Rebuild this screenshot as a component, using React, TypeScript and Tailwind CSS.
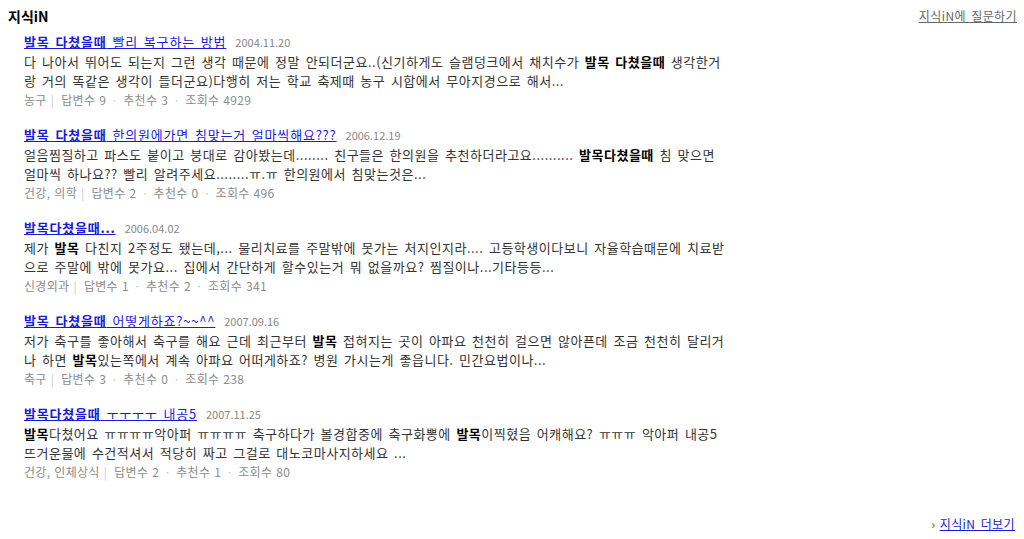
import React from "react";

type Seg = { t: string; b?: boolean };

type Item = {
  title: Seg[];
  date: string;
  lines: Seg[][];
  cat: string;
  ans: number;
  rec: number;
  view: number;
};

const items: Item[] = [
  {
    title: [{ t: "발목 다쳤을때", b: true }, { t: " 빨리 복구하는 방법" }],
    date: "2004.11.20",
    lines: [
      [
        { t: "다 나아서 뛰어도 되는지 그런 생각 때문에 정말 안되더군요..(신기하게도 슬램덩크에서 채치수가 " },
        { t: "발목 다쳤을때", b: true },
        { t: " 생각한거" },
      ],
      [{ t: "랑 거의 똑같은 생각이 들더군요)다행히 저는 학교 축제때 농구 시합에서 무아지경으로 해서..." }],
    ],
    cat: "농구",
    ans: 9,
    rec: 3,
    view: 4929,
  },
  {
    title: [{ t: "발목 다쳤을때", b: true }, { t: " 한의원에가면 침맞는거 얼마씩해요???" }],
    date: "2006.12.19",
    lines: [
      [
        { t: "얼음찜질하고 파스도 붙이고 붕대로 감아봤는데........ 친구들은 한의원을 추천하더라고요.......... " },
        { t: "발목다쳤을때", b: true },
        { t: " 침 맞으면" },
      ],
      [{ t: "얼마씩 하나요?? 빨리 알려주세요........ㅠ.ㅠ 한의원에서 침맞는것은..." }],
    ],
    cat: "건강, 의학",
    ans: 2,
    rec: 0,
    view: 496,
  },
  {
    title: [{ t: "발목다쳤을때...", b: true }],
    date: "2006.04.02",
    lines: [
      [
        { t: "제가 " },
        { t: "발목", b: true },
        { t: " 다친지 2주정도 됐는데,... 물리치료를 주말밖에 못가는 처지인지라.... 고등학생이다보니 자율학습때문에 치료받" },
      ],
      [{ t: "으로 주말에 밖에 못가요... 집에서 간단하게 할수있는거 뭐 없을까요? 찜질이나...기타등등..." }],
    ],
    cat: "신경외과",
    ans: 1,
    rec: 2,
    view: 341,
  },
  {
    title: [{ t: "발목 다쳤을때", b: true }, { t: " 어떻게하죠?~~^^" }],
    date: "2007.09.16",
    lines: [
      [
        { t: "저가 축구를 좋아해서 축구를 해요 근데 최근부터 " },
        { t: "발목", b: true },
        { t: " 접혀지는 곳이 아파요 천천히 걸으면 않아픈데 조금 천천히 달리거" },
      ],
      [
        { t: "나 하면 " },
        { t: "발목", b: true },
        { t: "있는쪽에서 계속 아파요 어떠게하죠? 병원 가시는게 좋읍니다. 민간요법이나..." },
      ],
    ],
    cat: "축구",
    ans: 3,
    rec: 0,
    view: 238,
  },
  {
    title: [{ t: "발목다쳤을때", b: true }, { t: " ㅜㅜㅜㅜ 내공5" }],
    date: "2007.11.25",
    lines: [
      [
        { t: "발목", b: true },
        { t: "다쳤어요 ㅠㅠㅠㅠ악아퍼 ㅠㅠㅠㅠ 축구하다가 볼경합중에 축구화뽕에 " },
        { t: "발목", b: true },
        { t: "이찍혔음 어캐해요? ㅠㅠㅠ 악아퍼 내공5" },
      ],
      [{ t: "뜨거운물에 수건적셔서 적당히 짜고 그걸로 대노코마사지하세요 ..." }],
    ],
    cat: "건강, 인체상식",
    ans: 2,
    rec: 1,
    view: 80,
  },
];

const font = { fontFamily: '"Noto Sans CJK KR", "Noto Sans", sans-serif' };

function Segs({ segs, boldClass }: { segs: Seg[]; boldClass: string }) {
  return (
    <>
      {segs.map((s, i) =>
        s.b ? (
          <b key={i} className={boldClass}>
            {s.t}
          </b>
        ) : (
          <span key={i}>{s.t}</span>
        )
      )}
    </>
  );
}

function Dot() {
  return <span className="mx-[5px] text-[#c4c4c4]">·</span>;
}

export default function App() {
  return (
    <div
      className="w-[1024px] h-[539px] bg-white flex flex-col text-[13px] tracking-[0.5px] [word-spacing:2.2px]"
      style={font}
    >
      <div className="flex justify-between items-center pl-[8px] pr-[7px] pt-[6px] h-[26px]">
        <span className="font-bold text-[14px] text-black leading-[20px] tracking-normal">지식iN</span>
        <a href="#" className="text-[12px] text-[#666666] underline leading-[20px] tracking-[0.4px]">
          지식iN에 질문하기
        </a>
      </div>
      <div className="flex flex-col pl-[24px] pt-[6px] gap-[16px]">
        {items.map((it, idx) => (
          <div key={idx} className="flex flex-col">
            <div className="h-[20px] leading-[20px] whitespace-nowrap flex items-center">
              <a href="#" className="text-[#1a1adb] underline tracking-[0.8px]">
                <Segs segs={it.title} boldClass="font-bold" />
              </a>
              <span className="ml-[9px] text-[11px] text-[#888888] tracking-normal [word-spacing:normal]">
                {it.date}
              </span>
            </div>
            {it.lines.map((ln, j) => (
              <div key={j} className="h-[19px] leading-[19px] whitespace-nowrap text-[#333333]">
                <Segs segs={ln} boldClass="font-bold text-black" />
              </div>
            ))}
            <div className="h-[19px] leading-[19px] whitespace-nowrap text-[#8c8c8c] text-[12px] tracking-[0.3px] [word-spacing:1px] flex items-center">
              <span>{it.cat}</span>
              <span className="ml-[4px] mr-[7px] text-[#cccccc]">|</span>
              <span>답변수 {it.ans}</span>
              <Dot />
              <span>추천수 {it.rec}</span>
              <Dot />
              <span>조회수 {it.view}</span>
            </div>
          </div>
        ))}
      </div>
      <div className="flex-1" />
      <div className="flex justify-end items-center pr-[9px] pb-[6px] h-[24px]">
        <span className="text-[#3aa01a] font-bold text-[12px] mr-[4px] leading-none">›</span>
        <a href="#" className="text-[#1a1adb] underline text-[12px] leading-[18px] tracking-[0.4px]">
          지식iN 더보기
        </a>
      </div>
    </div>
  );
}
